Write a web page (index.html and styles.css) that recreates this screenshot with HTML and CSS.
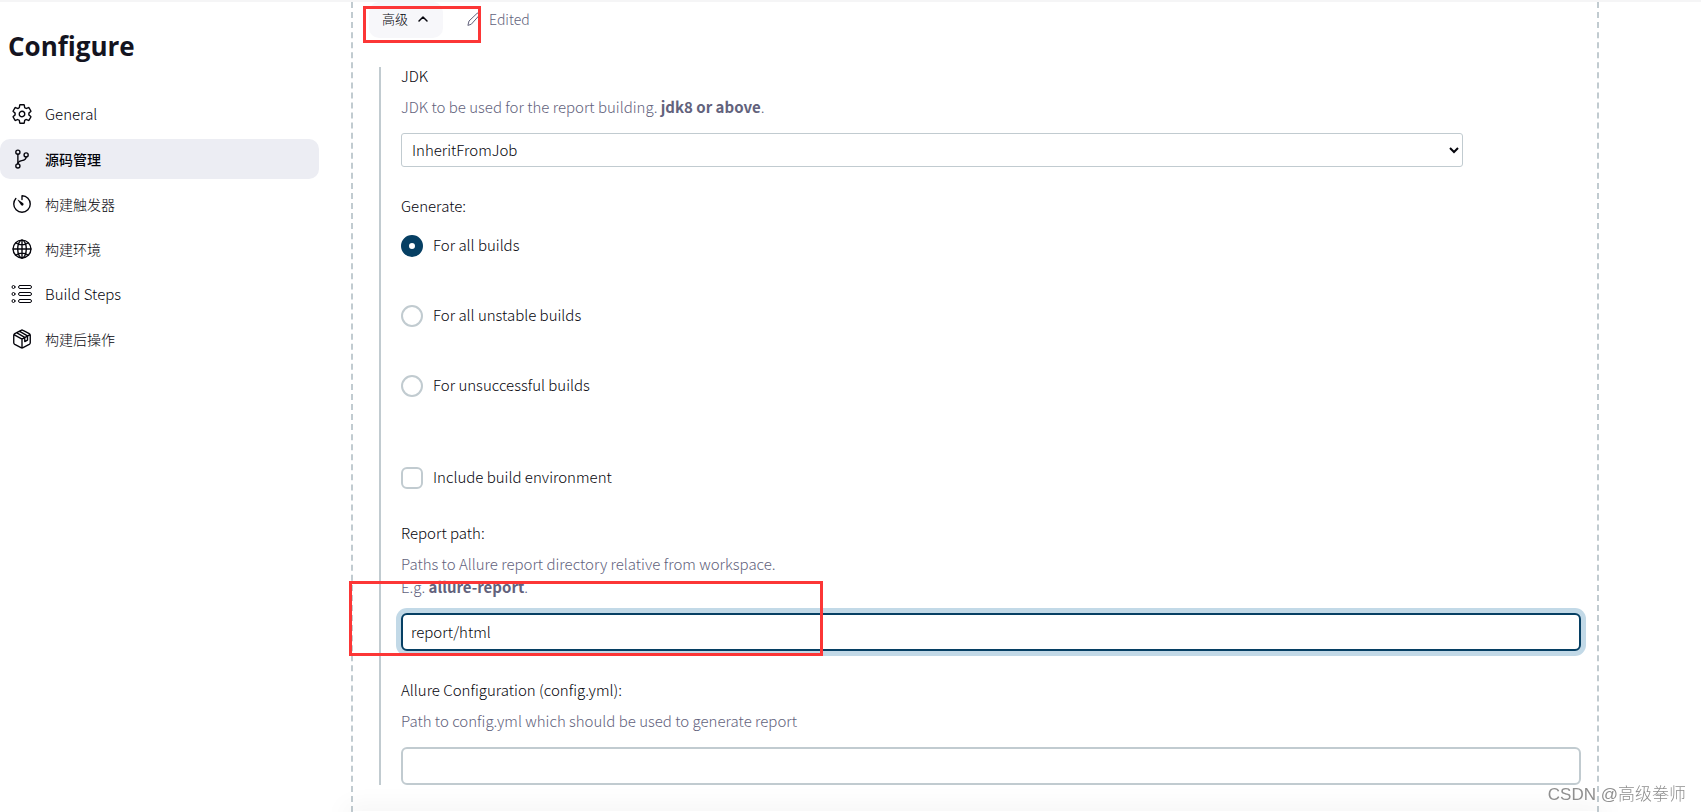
FILE: index.html
```html
<!DOCTYPE html>
<html lang="zh-CN">
<head>
  <meta charset="utf-8">
  <title>Configure</title>
  <link rel="stylesheet" href="styles.css">
</head>
<body>

<div class="page">
  <aside class="sidebar">
    <h1>Configure</h1>
    <nav class="tasks">
      <a class="task" href="#general">
        <svg viewBox="0 0 512 512"><path d="M262.29 192.31a64 64 0 1057.4 57.4 64.13 64.13 0 00-57.4-57.4zM416.39 256a154.34 154.34 0 01-1.53 20.79l45.21 35.46a10.81 10.81 0 012.45 13.75l-42.77 74a10.81 10.81 0 01-13.14 4.59l-44.9-18.08a16.11 16.11 0 00-15.17 1.75A164.48 164.48 0 01325 400.8a15.94 15.94 0 00-8.82 12.14l-6.73 47.89a11.08 11.08 0 01-10.68 9.17h-85.54a11.11 11.11 0 01-10.69-8.87l-6.72-47.82a16.07 16.07 0 00-9-12.22 155.3 155.3 0 01-21.46-12.57 16 16 0 00-15.11-1.71l-44.89 18.07a10.81 10.81 0 01-13.14-4.58l-42.77-74a10.8 10.8 0 012.45-13.75l38.21-30a16.05 16.05 0 006-14.08c-.36-4.17-.58-8.33-.58-12.5s.21-8.27.58-12.35a16 16 0 00-6.07-13.94l-38.19-30A10.81 10.81 0 0149.48 186l42.77-74a10.81 10.81 0 0113.14-4.59l44.9 18.08a16.11 16.11 0 0015.17-1.75A164.48 164.48 0 01187 111.2a15.94 15.94 0 008.82-12.14l6.73-47.89A11.08 11.08 0 01213.23 42h85.54a11.11 11.11 0 0110.69 8.87l6.72 47.82a16.07 16.07 0 009 12.22 155.3 155.3 0 0121.46 12.57 16 16 0 0015.11 1.71l44.89-18.07a10.81 10.81 0 0113.14 4.58l42.77 74a10.8 10.8 0 01-2.45 13.75l-38.21 30a16.05 16.05 0 00-6.05 14.08c.33 4.14.55 8.3.55 12.47z"/></svg>
        <span>General</span>
      </a>
      <a class="task active" href="#scm">
        <svg viewBox="0 0 512 512"><circle cx="160" cy="96" r="48"/><circle cx="160" cy="416" r="48"/><path d="M160 368V144"/><circle cx="352" cy="160" r="48"/><path d="M352 208c0 128-192 48-192 160"/></svg>
        <span class="zh">源码管理</span>
      </a>
      <a class="task" href="#triggers">
        <svg viewBox="0 0 512 512"><path d="M112.91 128A191.85 191.85 0 0064 254c-1.18 106.35 85.65 193.8 192 194 106.2.2 192-85.83 192-192 0-104.54-83.55-189.61-187.5-192a4.36 4.36 0 00-4.5 4.37V152"/><path class="solid" d="M233.38 278.63l-79-113a8.13 8.13 0 0111.32-11.32l113 79a32.5 32.5 0 01-37.25 53.26 33.21 33.21 0 01-8.07-7.94z"/></svg>
        <span class="zh">构建触发器</span>
      </a>
      <a class="task" href="#environment">
        <svg viewBox="0 0 512 512"><circle cx="256" cy="256" r="208"/><ellipse cx="256" cy="256" rx="100" ry="208"/><path d="M256 48v416M48 256h416M117 117c38 27 86 43 139 43s101-16 139-43M117 395c38-27 86-43 139-43s101 16 139 43"/></svg>
        <span class="zh">构建环境</span>
      </a>
      <a class="task" href="#steps">
        <svg class="list" viewBox="0 0 22 22"><rect x="7.500" y="2.500" width="13" height="3" rx="1.500"/><rect x="7.500" y="9.500" width="13" height="3" rx="1.500"/><rect x="7.500" y="16.500" width="13" height="3" rx="1.500"/><circle cx="2.500" cy="4" r="1.500"/><circle cx="2.500" cy="11" r="1.500"/><circle cx="2.500" cy="18" r="1.500"/></svg>
        <span>Build Steps</span>
      </a>
      <a class="task" href="#post-build">
        <svg viewBox="0 0 512 512"><path d="M448 341V171a48 48 0 00-24-41L280 54a48 48 0 00-48 0L88 130a48 48 0 00-24 41v170a48 48 0 0024 41l144 77a48 48 0 0048 0l144-77a48 48 0 0024-41zM69 153l187 104 187-104M256 463V257M127 108l193 110v98l64-36v-98L191 74"/></svg>
        <span class="zh">构建后操作</span>
      </a>
    </nav>
  </aside>

  <main class="panel">
    <div class="advanced-row">
      <button class="advanced" type="button">高级
        <svg viewBox="0 0 14 14"><path d="M3 9l4-4 4 4"/></svg>
      </button>
      <span class="edited">
        <svg viewBox="0 0 14 14"><path d="M1 13l1-4L10 1.400q1-.9 2 0t.2 2L4.500 12z"/></svg>
        Edited
      </span>
      <div class="mark mark-advanced"></div>
    </div>

    <form class="advanced-body">
      <div class="field">
        <label class="label" for="jdk">JDK</label>
        <p class="help">JDK to be used for the report building. <b>jdk8 or above</b>.</p>
        <select id="jdk" class="select">
          <option>InheritFromJob</option>
        </select>
      </div>

      <fieldset class="field">
        <legend class="label">Generate:</legend>
        <div class="radios">
          <label class="choice"><input type="radio" name="policy" checked> For all builds</label>
          <label class="choice"><input type="radio" name="policy"> For all unstable builds</label>
          <label class="choice"><input type="radio" name="policy"> For unsuccessful builds</label>
        </div>
      </fieldset>

      <label class="choice environment"><input type="checkbox"> Include build environment</label>

      <div class="field">
        <label class="label" for="report">Report path:</label>
        <p class="help">Paths to Allure report directory relative from workspace.<br>E.g. <b>allure-report</b>.</p>
        <div class="input-wrap">
          <input id="report" class="input focused" type="text" value="report/html">
          <div class="mark mark-report"></div>
        </div>
      </div>

      <div class="field">
        <label class="label" for="config">Allure Configuration (config.yml):</label>
        <p class="help">Path to config.yml which should be used to generate report</p>
        <input id="config" class="input" type="text">
      </div>
    </form>
  </main>
</div>

<div class="bottom-shadow"></div>
<div class="watermark">CSDN @高级拳师</div>

</body>
</html>
```
FILE: styles.css
```css
* {
  box-sizing: border-box;
}
body {
  margin: 0;
  font-family: "Noto Sans CJK SC", "Noto Sans", sans-serif;
  font-size: 15px;
  font-weight: 300;
  line-height: 20px;
  color: #05050c;
  background: #fff;
}
h1, p, fieldset {
  margin: 0;
  padding: 0;
  border: 0;
}
b {
  font-weight: 600;
}
svg {
  flex: none;
  fill: none;
  stroke: currentColor;
  stroke-linecap: round;
  stroke-linejoin: round;
}

.page {
  display: flex;
  gap: 32px;
  min-height: 100vh;
  padding-right: 6%;
  border-top: 2px solid #f5f5f6;
}

/* sidebar */
.sidebar {
  flex: none;
  width: 319px;
}
.sidebar h1 {
  padding: 24px 8px 28px;
  font-family: "Open Sans", sans-serif;
  font-size: 26px;
  font-weight: 700;
  line-height: 40px;
  color: #14141f;
}
.tasks {
  display: flex;
  flex-direction: column;
  gap: 5px;
}
.task {
  display: flex;
  align-items: center;
  gap: 12px;
  height: 40px;
  padding-left: 11px;
  border-radius: 10px;
  color: #05050c;
  text-decoration: none;
}
.task svg {
  width: 22px;
  height: 22px;
  stroke-width: 32;
}
.task svg.list {
  stroke-width: 1;
}
.task .solid {
  fill: currentColor;
  stroke: none;
}
.task .zh {
  font-size: 14px;
}
.task.active {
  background: #ecedf3;
  font-weight: 500;
}

/* main column */
.panel {
  flex: 1;
  min-width: 0;
  padding: 0 16px 27px;
  border: 2px dashed #c1cbd0;
  border-width: 0 2px;
}
.advanced-row {
  position: relative;
  display: flex;
  align-items: center;
  gap: 24px;
  height: 36px;
  margin-bottom: 29px;
}
.advanced {
  display: flex;
  align-items: center;
  gap: 8px;
  height: 36px;
  padding: 0 13px 2px;
  border: 0;
  border-radius: 10px;
  background: #f7f7fa;
  color: #05050c;
  font: inherit;
  font-size: 13px;
}
.advanced svg {
  width: 14px;
  height: 14px;
  stroke-width: 1.5;
}
.edited {
  display: flex;
  align-items: center;
  gap: 8px;
  padding-bottom: 2px;
  color: #62627c;
  font-size: 14px;
}
.edited svg {
  width: 14px;
  height: 14px;
}

.advanced-body {
  display: flex;
  flex-direction: column;
  gap: 30px;
  margin-left: 10px;
  padding-left: 20px;
  border-left: 2px solid #c1cbd0;
}
.label {
  display: block;
  padding: 0 0 2px;
  line-height: 18px;
}
.help {
  margin: 8px 0 15px;
  line-height: 23px;
  color: #62627c;
}
.select {
  display: block;
  width: 90%;
  height: 34px;
  padding: 0 6px 2px;
  border: 1px solid #c1cbd0;
  border-radius: 3px;
  background: #fff;
  color: #05050c;
  font: inherit;
}
.radios {
  display: flex;
  flex-direction: column;
  gap: 48px;
  padding-top: 18px;
}
.choice {
  display: flex;
  align-items: flex-start;
  gap: 10px;
  height: 22px;
}
.choice input {
  appearance: none;
  width: 22px;
  height: 22px;
  margin: 0;
  border: 2px solid #c1cbd0;
  border-radius: 50%;
  background: #fff;
}
.choice input[type="checkbox"] {
  border-radius: 6px;
}
.choice input:checked {
  border: 8px solid #063f63;
}
.environment {
  margin: 40px 0 5px;
}
.input-wrap {
  position: relative;
}
.input {
  display: block;
  width: 100%;
  height: 38px;
  padding: 0 8px 2px;
  border: 2px solid #c1cbd0;
  border-radius: 6px;
  outline: 0;
  background: #fff;
  color: #05050c;
  font: inherit;
}
.input.focused {
  border-color: #063f63;
  box-shadow: 0 0 0 5px #c2d9e7;
}

/* red highlight boxes */
.mark {
  position: absolute;
  border: 3px solid #fc3636;
  pointer-events: none;
}
.mark-advanced {
  top: 4px;
  left: -6px;
  width: 118px;
  height: 37px;
}
.mark-report {
  top: -32px;
  left: -52px;
  width: 474px;
  height: 75px;
}

.bottom-shadow {
  position: fixed;
  bottom: 0;
  left: 351px;
  right: 6%;
  height: 1px;
  box-shadow: 0 4px 26px 6px rgba(0, 0, 0, .07);
  pointer-events: none;
}
.watermark {
  position: fixed;
  right: 15px;
  bottom: 5px;
  font-family: "Liberation Sans", "Noto Sans CJK SC", sans-serif;
  font-size: 17px;
  line-height: 24px;
  color: #8f8f8f;
}
```
